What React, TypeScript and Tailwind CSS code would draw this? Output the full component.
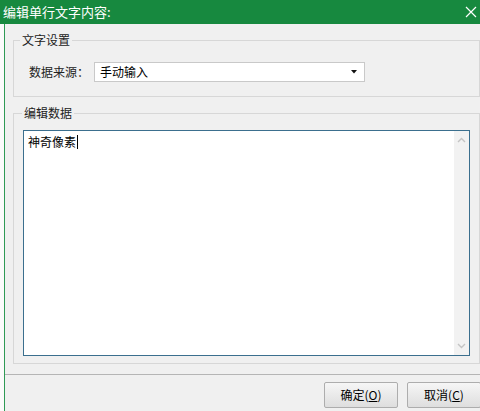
export default function App() {
  return (
    <div className="w-[480px] h-[411px] overflow-hidden flex flex-col bg-[#f0f0f0] text-[12px] text-black font-['Microsoft_YaHei','Noto_Sans_CJK_SC',sans-serif] leading-4">
      {/* title bar */}
      <div className="h-[24px] shrink-0 bg-[#17893f] flex items-center justify-between pl-[3px] pr-[2px] text-white text-[13px]">
        <span>编辑单行文字内容:</span>
        <svg width="12" height="12" viewBox="0 0 12 12" className="mr-[1px]">
          <path d="M1 1 L11 11 M11 1 L1 11" stroke="#ffffff" strokeWidth="1.2" />
        </svg>
      </div>

      <div className="flex flex-1 min-h-0">
        <div className="w-[5px] bg-[#fbfbfb] border-r border-[#2f9a55]" />
        <div className="flex-1 flex flex-col min-w-0">
          <div className="pl-[8px] flex flex-col">
            {/* group 1 */}
            <fieldset className="mt-[8px] w-[467px] border border-[#d7d7d7] px-[6px] pt-[14px] pb-[14px] shrink-0">
              <legend className="px-[2px] leading-4 text-[#222]">文字设置</legend>
              <div className="flex items-center ml-[9px]">
                <span className="w-[65px] text-[#222]">数据来源：</span>
                <div className="w-[271px] h-[20px] bg-white border border-[#c9c9c9] flex items-center justify-between pl-[5px] pr-[7px]">
                  <span>手动输入</span>
                  <svg width="6" height="4" viewBox="0 0 6 4">
                    <path d="M0 0 H6 L3 3.5 Z" fill="#111" />
                  </svg>
                </div>
              </div>
            </fieldset>

            {/* group 2 */}
            <fieldset className="mt-[8px] w-[467px] border border-[#d7d7d7] px-[9px] pt-[9px] pb-[7px] shrink-0">
              <legend className="px-[2px] -ml-[1px] leading-4 text-[#222]">编辑数据</legend>
              <div className="h-[226px] bg-white border border-[#3b6f8e] flex">
                <div className="flex-1 pl-[4px] pt-[3px] flex items-start">
                  <span>神奇像素</span>
                  <span className="w-px h-[14px] bg-black mt-[1px] ml-[1px]" />
                </div>
                <div className="w-[15px] bg-[#f2f2f2] flex flex-col items-center justify-between py-[6px]">
                  <svg width="9" height="6" viewBox="0 0 9 6">
                    <path d="M1 5 L4.5 1.5 L8 5" stroke="#c4c4c4" strokeWidth="1.4" fill="none" />
                  </svg>
                  <svg width="9" height="6" viewBox="0 0 9 6">
                    <path d="M1 1 L4.5 4.5 L8 1" stroke="#c4c4c4" strokeWidth="1.4" fill="none" />
                  </svg>
                </div>
              </div>
            </fieldset>
          </div>

          {/* footer */}
          <div className="mt-[10px] flex-1 border-t border-[#b5b5b5] flex justify-end gap-[9px] pt-[7px] -mr-[1px]">
            <button className="w-[74px] h-[26px] border border-[#adadad] rounded-[2px] bg-gradient-to-b from-[#f6f6f6] to-[#dedede] text-[12px]">
              确定(<span className="underline">O</span>)
            </button>
            <button className="w-[74px] h-[26px] border border-[#adadad] rounded-[2px] bg-gradient-to-b from-[#f6f6f6] to-[#dedede] text-[12px]">
              取消(<span className="underline">C</span>)
            </button>
          </div>
        </div>
      </div>
    </div>
  );
}
